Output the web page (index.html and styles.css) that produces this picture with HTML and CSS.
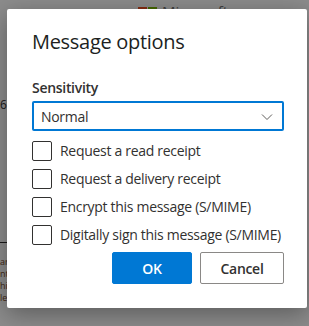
FILE: index.html
```html
<!DOCTYPE html>
<html lang="en">
<head>
  <title>Message options</title>
  <link rel="stylesheet" href="styles.css">
</head>
<body>
  <div class="page">
    <div class="page-top">
      <span class="brand"><span class="logo-red"></span><span class="logo-green"></span>Microsoft</span>
    </div>
    <div class="page-side">
      <div class="side-num">69</div>
      <div class="side-rule"></div>
      <div class="side-line">ar</div>
      <div class="side-line">nt</div>
      <div class="side-line">his</div>
      <div class="side-line">le</div>
    </div>
  </div>
  <div class="overlay">
    <div class="dialog">
      <h1 class="title">Message options</h1>
      <label class="field-label">Sensitivity</label>
      <div class="dropdown">
        <span>Normal</span>
        <svg class="chevron" width="12" height="12" viewBox="0 0 12 12">
          <path d="M1 3.5 L6 8.5 L11 3.5" fill="none" stroke="#605e5c" stroke-width="1"/>
        </svg>
      </div>
      <div class="checks">
        <div class="check"><span class="box"></span><span>Request a read receipt</span></div>
        <div class="check"><span class="box"></span><span>Request a delivery receipt</span></div>
        <div class="check"><span class="box"></span><span>Encrypt this message (S/MIME)</span></div>
        <div class="check"><span class="box"></span><span>Digitally sign this message (S/MIME)</span></div>
      </div>
      <div class="actions">
        <button class="btn btn-primary">OK</button>
        <button class="btn btn-cancel">Cancel</button>
      </div>
    </div>
  </div>
</body>
</html>
```

FILE: styles.css
```css
*{
  margin: 0;
  padding: 0;
  box-sizing: border-box;
  font-family: "Open Sans", "Noto Sans", sans-serif;
}
body{
  width: 309px;
  height: 326px;
  overflow: hidden;
  position: relative;
  background: #ffffff;
}
.page{
  height: 100%;
}
.page-top{
  height: 24px;
  padding-left: 138px;
  padding-top: 1px;
}
.brand{
  display: flex;
  align-items: center;
  gap: 1px;
  font-size: 15px;
  color: #737373;
}
.logo-red, .logo-green{
  width: 9px;
  height: 9px;
  display: inline-block;
}
.logo-red{ background: #f25022; }
.logo-green{ background: #7fba00; margin-right: 4px; }
.page-side{
  padding-top: 72px;
  font-size: 12px;
  color: #323130;
}
.side-num{
  height: 146px;
}
.side-rule{
  width: 10px;
  border-top: 1px solid #323130;
  margin-bottom: 13px;
}
.side-line{
  font-size: 9px;
  line-height: 12px;
  height: 12px;
  overflow: hidden;
  color: #7a4a2a;
}
.overlay{
  position: absolute;
  inset: 0;
  background: rgba(0, 0, 0, 0.45);
  padding: 9px 2px 0 7px;
}
.dialog{
  width: 300px;
  height: 299px;
  background: #ffffff;
  border-radius: 2px;
  box-shadow: 0 6px 24px rgba(0, 0, 0, 0.35);
  padding: 19px 23px 0 25px;
  color: #323130;
}
.title{
  font-size: 20px;
  font-weight: 500;
  line-height: 28px;
  color: #201f1e;
  letter-spacing: -0.3px;
  margin-bottom: 22px;
}
.field-label{
  display: block;
  font-size: 14px;
  font-weight: 600;
  line-height: 20px;
  letter-spacing: -0.3px;
  margin-bottom: 3px;
}
.dropdown{
  width: 252px;
  height: 30px;
  border: 2px solid #0078d4;
  border-radius: 2px;
  display: flex;
  align-items: center;
  justify-content: space-between;
  padding: 0 9px 0 7px;
  font-size: 14px;
  letter-spacing: -0.3px;
  margin-bottom: 10px;
}
.chevron{
  margin-top: 2px;
}
.checks{
  display: flex;
  flex-direction: column;
  gap: 8px;
}
.check{
  display: flex;
  align-items: center;
  gap: 8px;
  font-size: 14px;
  line-height: 20px;
  letter-spacing: -0.3px;
}
.box{
  width: 20px;
  height: 20px;
  border: 1px solid #323130;
  border-radius: 2px;
  flex: none;
}
.actions{
  display: flex;
  gap: 8px;
  margin-top: 7px;
  width: 252px;
  justify-content: flex-end;
}
.btn{
  height: 32px;
  width: 80px;
  border: 1px solid #8a8886;
  border-radius: 2px;
  background: #ffffff;
  color: #323130;
  font-size: 14px;
  font-weight: 600;
  letter-spacing: -0.3px;
}
.btn-primary{
  background: #0078d4;
  border-color: #0078d4;
  color: #ffffff;
}
.btn-cancel{
  width: 84px;
}
```
